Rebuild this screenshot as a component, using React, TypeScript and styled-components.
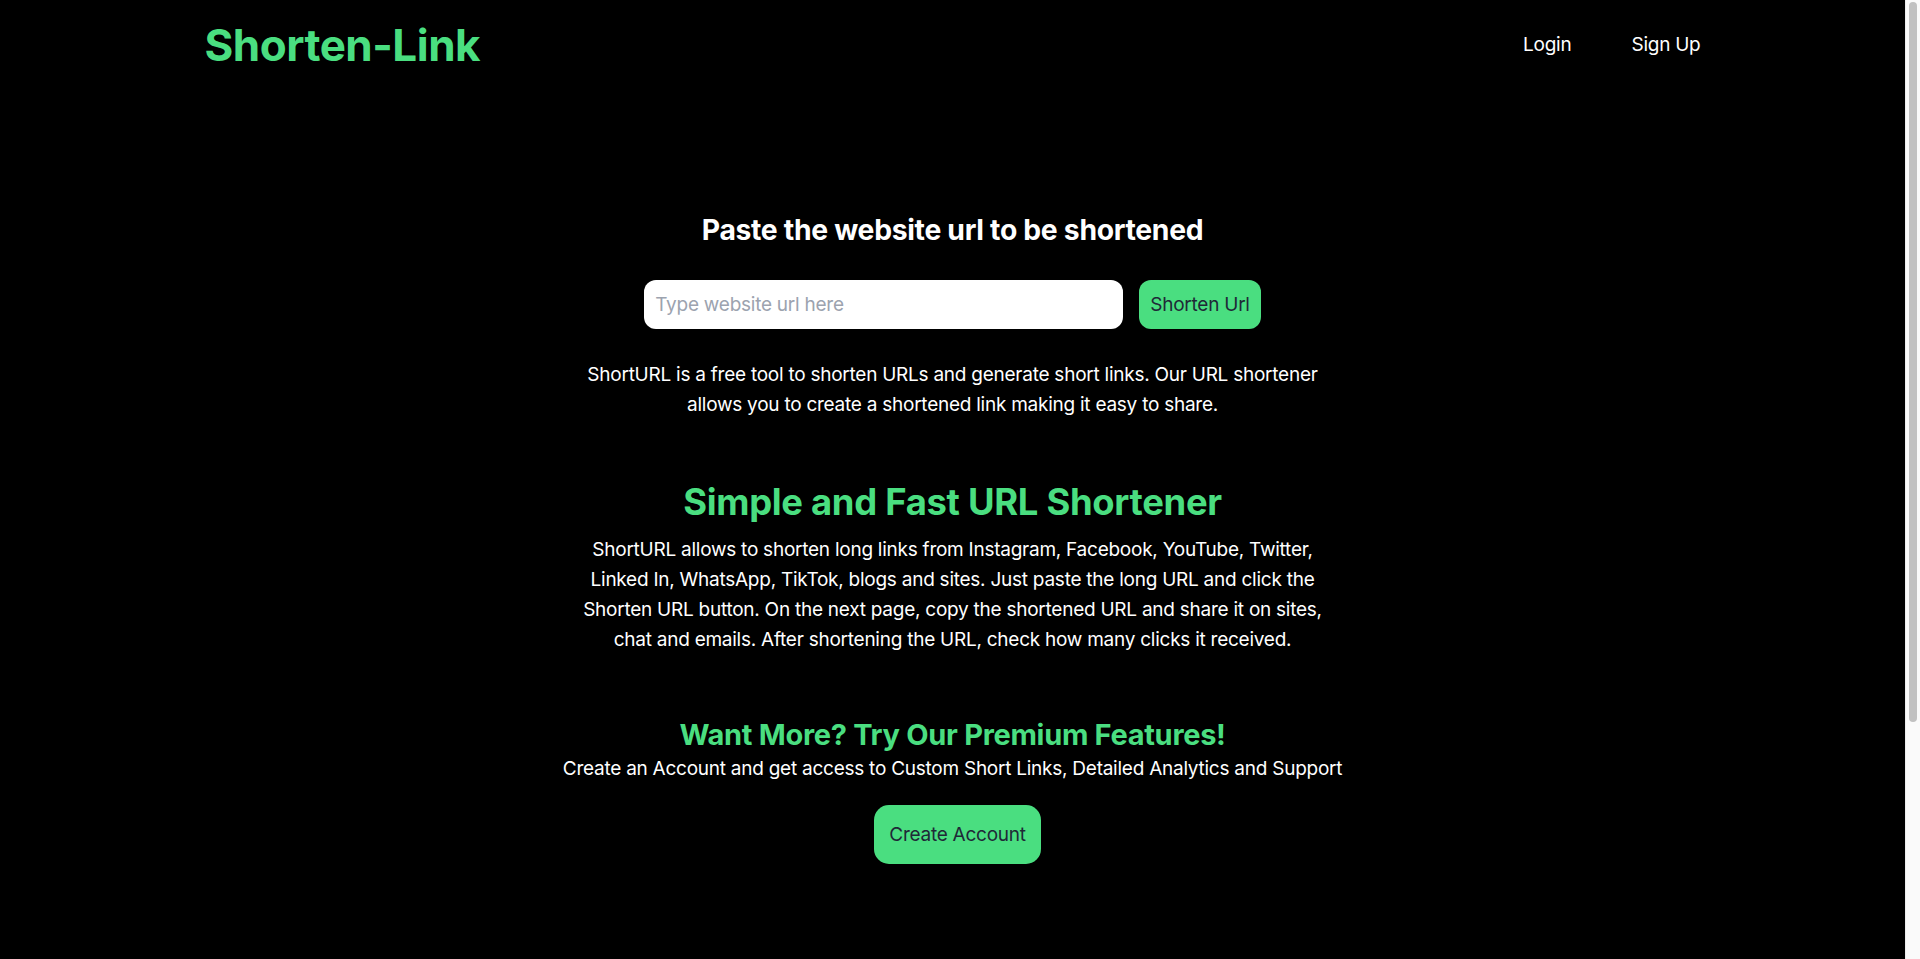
import React from "react";
import styled, { createGlobalStyle } from "styled-components";

const GlobalStyle = createGlobalStyle`
  html, body {
    margin: 0;
    padding: 0;
    background: #000;
    color: #fff;
    font-family: Inter, "Noto Sans", "Liberation Sans", sans-serif;
    -webkit-font-smoothing: antialiased;
  }
  * { box-sizing: border-box; }
`;

const green = "#4ade80";

const Layout = styled.div`
  display: flex;
  align-items: flex-start;
  background: #000;
`;

const Page = styled.div`
  flex: 1;
  min-width: 0;
  min-height: 1276px;
`;

const ScrollTrack = styled.div`
  position: sticky;
  top: 0;
  flex: 0 0 15px;
  height: 100vh;
  background: #fafafa;
  border-left: 1px solid #ececec;
  padding: 2px 3px 0 3px;
`;

const ScrollThumb = styled.div`
  height: 720px;
  border-radius: 4px;
  background: #c1c1c1;
`;

const Header = styled.header`
  max-width: 1536px;
  margin: 0 auto;
  padding: 0 20px;
  height: 90px;
  display: flex;
  align-items: center;
  justify-content: space-between;
`;

const Logo = styled.h1`
  margin: 0;
  font-size: 44px;
  line-height: 1;
  font-weight: 700;
  color: ${green};
  letter-spacing: -0.5px;
`;

const Nav = styled.nav`
  display: flex;
  align-items: center;
  gap: 60px;
`;

const NavLink = styled.a`
  font-size: 19px;
  line-height: 30px;
  letter-spacing: -0.25px;
  color: #fff;
  text-decoration: none;
  cursor: pointer;
`;

const Main = styled.main`
  display: flex;
  flex-direction: column;
  align-items: center;
  text-align: center;
  padding-top: 122.5px;
`;

const Heading = styled.h2<{ $size: number; $lh: number; $green?: boolean; $mt?: number }>`
  margin: ${(p) => p.$mt ?? 0}px 0 0;
  font-size: ${(p) => p.$size}px;
  line-height: ${(p) => p.$lh}px;
  font-weight: 700;
  letter-spacing: -0.3px;
  color: ${(p) => (p.$green ? green : "#fff")};
`;

const Form = styled.form`
  margin-top: 32.5px;
  display: flex;
  align-items: center;
  gap: 16px;
`;

const UrlInput = styled.input`
  width: 479px;
  height: 49px;
  border: none;
  outline: none;
  border-radius: 12px;
  background: #fff;
  padding: 0 11px;
  font-family: inherit;
  font-size: 19px;
  letter-spacing: -0.25px;
  color: #111827;
  &::placeholder {
    color: #9ca3af;
  }
`;

const GreenButton = styled.button<{ $h: number; $px: number; $r: number; $mt?: number; $ml?: number }>`
  margin-top: ${(p) => p.$mt ?? 0}px;
  margin-left: ${(p) => p.$ml ?? 0}px;
  height: ${(p) => p.$h}px;
  padding: 0 ${(p) => p.$px}px;
  border: none;
  border-radius: ${(p) => p.$r}px;
  background: ${green};
  color: #1f2937;
  font-family: inherit;
  font-size: 19px;
  letter-spacing: -0.25px;
  cursor: pointer;
`;

const Text = styled.p<{ $mt?: number; $max?: number }>`
  margin: ${(p) => p.$mt ?? 0}px 0 0;
  max-width: ${(p) => p.$max ?? 1000}px;
  font-size: 19px;
  line-height: 30px;
  letter-spacing: -0.25px;
  color: #fff;
`;

export default function App() {
  return (
    <Layout>
      <GlobalStyle />
      <Page>
        <Header>
          <Logo>Shorten-Link</Logo>
          <Nav>
            <NavLink>Login</NavLink>
            <NavLink>Sign Up</NavLink>
          </Nav>
        </Header>
        <Main>
          <Heading $size={28.3} $lh={35}>
            Paste the website url to be shortened
          </Heading>
          <Form onSubmit={(e) => e.preventDefault()}>
            <UrlInput type="text" placeholder="Type website url here" />
            <GreenButton type="submit" $h={49} $px={11} $r={12}>
              Shorten Url
            </GreenButton>
          </Form>
          <Text $mt={31} $max={770}>
            ShortURL is a free tool to shorten URLs and generate short links. Our URL shortener
            allows you to create a shortened link making it easy to share.
          </Text>
          <Heading $size={36.4} $lh={45} $green $mt={59.5}>
            Simple and Fast URL Shortener
          </Heading>
          <Text $mt={10.5} $max={770}>
            ShortURL allows to shorten long links from Instagram, Facebook, YouTube, Twitter,
            Linked In, WhatsApp, TikTok, blogs and sites. Just paste the long URL and click the
            Shorten URL button. On the next page, copy the shortened URL and share it on sites,
            chat and emails. After shortening the URL, check how many clicks it received.
          </Text>
          <Heading $size={29} $lh={37.5} $green $mt={61}>
            Want More? Try Our Premium Features!
          </Heading>
          <Text>
            Create an Account and get access to Custom Short Links, Detailed Analytics and Support
          </Text>
          <GreenButton type="button" $h={59} $px={15} $r={15} $mt={21} $ml={10}>
            Create Account
          </GreenButton>
        </Main>
      </Page>
      <ScrollTrack aria-hidden="true">
        <ScrollThumb />
      </ScrollTrack>
    </Layout>
  );
}
